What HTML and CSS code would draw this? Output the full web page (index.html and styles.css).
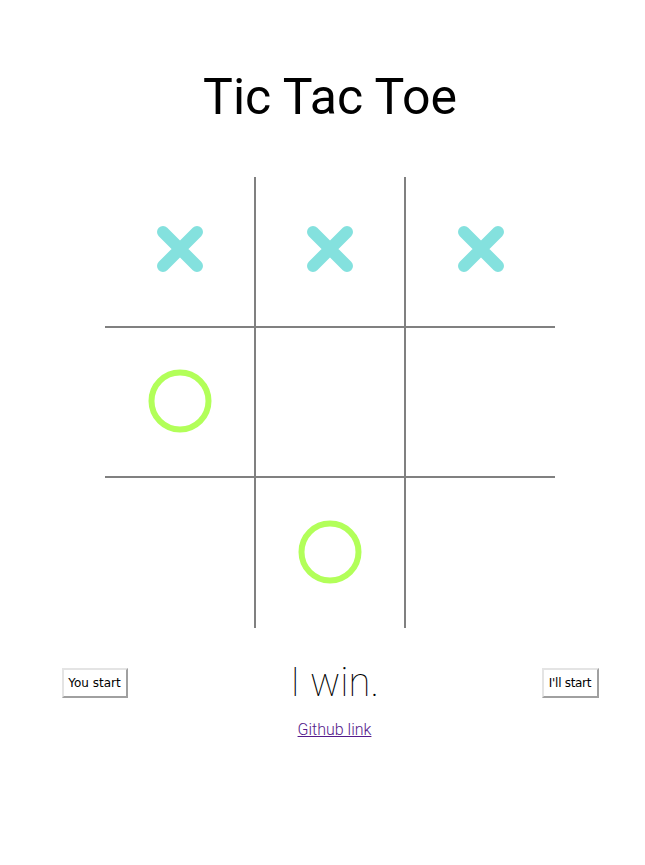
FILE: index.html
```html
<!DOCTYPE html>
<html>
<head>
<meta charset="utf-8">
<title>Tic Tac Toe</title>
<link rel="stylesheet" href="styles.css">
</head>
<body>
<div class="page">
  <h1 class="title">Tic Tac Toe</h1>
  <div class="board">
    <div class="cell"><svg class="mark-x" width="46" height="46" viewBox="0 0 46 46"><path d="M6 6L40 40M40 6L6 40"/></svg></div>
    <div class="cell"><svg class="mark-x" width="46" height="46" viewBox="0 0 46 46"><path d="M6 6L40 40M40 6L6 40"/></svg></div>
    <div class="cell"><svg class="mark-x" width="46" height="46" viewBox="0 0 46 46"><path d="M6 6L40 40M40 6L6 40"/></svg></div>
    <div class="cell"><svg class="mark-o" width="64" height="64" viewBox="0 0 64 64"><circle cx="32" cy="32" r="28.5"/></svg></div>
    <div class="cell"></div>
    <div class="cell"></div>
    <div class="cell"></div>
    <div class="cell"><svg class="mark-o" width="64" height="64" viewBox="0 0 64 64"><circle cx="32" cy="32" r="28.5"/></svg></div>
    <div class="cell"></div>
  </div>
  <div class="controls">
    <button class="btn btn-left">You start</button>
    <div class="status">
      <div class="result">I win.</div>
      <a class="github" href="#">Github link</a>
    </div>
    <button class="btn btn-right">I'll start</button>
  </div>
</div>
</body>
</html>
```
FILE: styles.css
```css
html, body {
  margin: 0;
  padding: 0;
  background: #fff;
}
.page {
  width: 645px;
  box-sizing: border-box;
  padding-left: 15px;
  font-family: Roboto, "Liberation Sans", sans-serif;
}
.title {
  margin: 0;
  padding-top: 69px;
  font-size: 50px;
  font-weight: 400;
  line-height: 57px;
  text-align: center;
  color: #000;
}
.board {
  margin: 51px auto 0;
  width: 450px;
  display: grid;
  grid-template-columns: 149px 148px 149px;
  grid-template-rows: 149px 148px 150px;
  gap: 2px;
  background: #808080;
}
.cell {
  background: #fff;
  display: flex;
  align-items: center;
  justify-content: center;
}
.mark-x {
  margin-bottom: 5px;
}
.mark-x path {
  stroke: #84e1de;
  stroke-width: 12;
  stroke-linecap: round;
  fill: none;
}
.mark-o {
  margin-bottom: 3px;
}
.mark-o circle {
  stroke: #b2ff59;
  stroke-width: 6;
  fill: none;
}
.controls {
  width: 537px;
  margin: 31px auto 0;
  display: flex;
  align-items: flex-start;
}
.btn {
  margin-top: 9px;
  height: 30px;
  padding: 0;
  background: #fff;
  border: 2px solid;
  border-color: #e4e4e4 #a0a0a0 #a0a0a0 #e4e4e4;
  font-family: "DejaVu Sans", Tahoma, sans-serif;
  font-size: 12px;
  color: #000;
}
.btn-left {
  width: 66px;
}
.btn-right {
  width: 57px;
  letter-spacing: -0.3px;
}
.status {
  flex: 1;
  display: flex;
  flex-direction: column;
  align-items: center;
}
.result {
  font-size: 40px;
  font-weight: 100;
  line-height: 47px;
  color: #000;
}
.github {
  margin-top: 14px;
  font-size: 16px;
  font-weight: 300;
  line-height: 19px;
  color: #551a8b;
}
```
